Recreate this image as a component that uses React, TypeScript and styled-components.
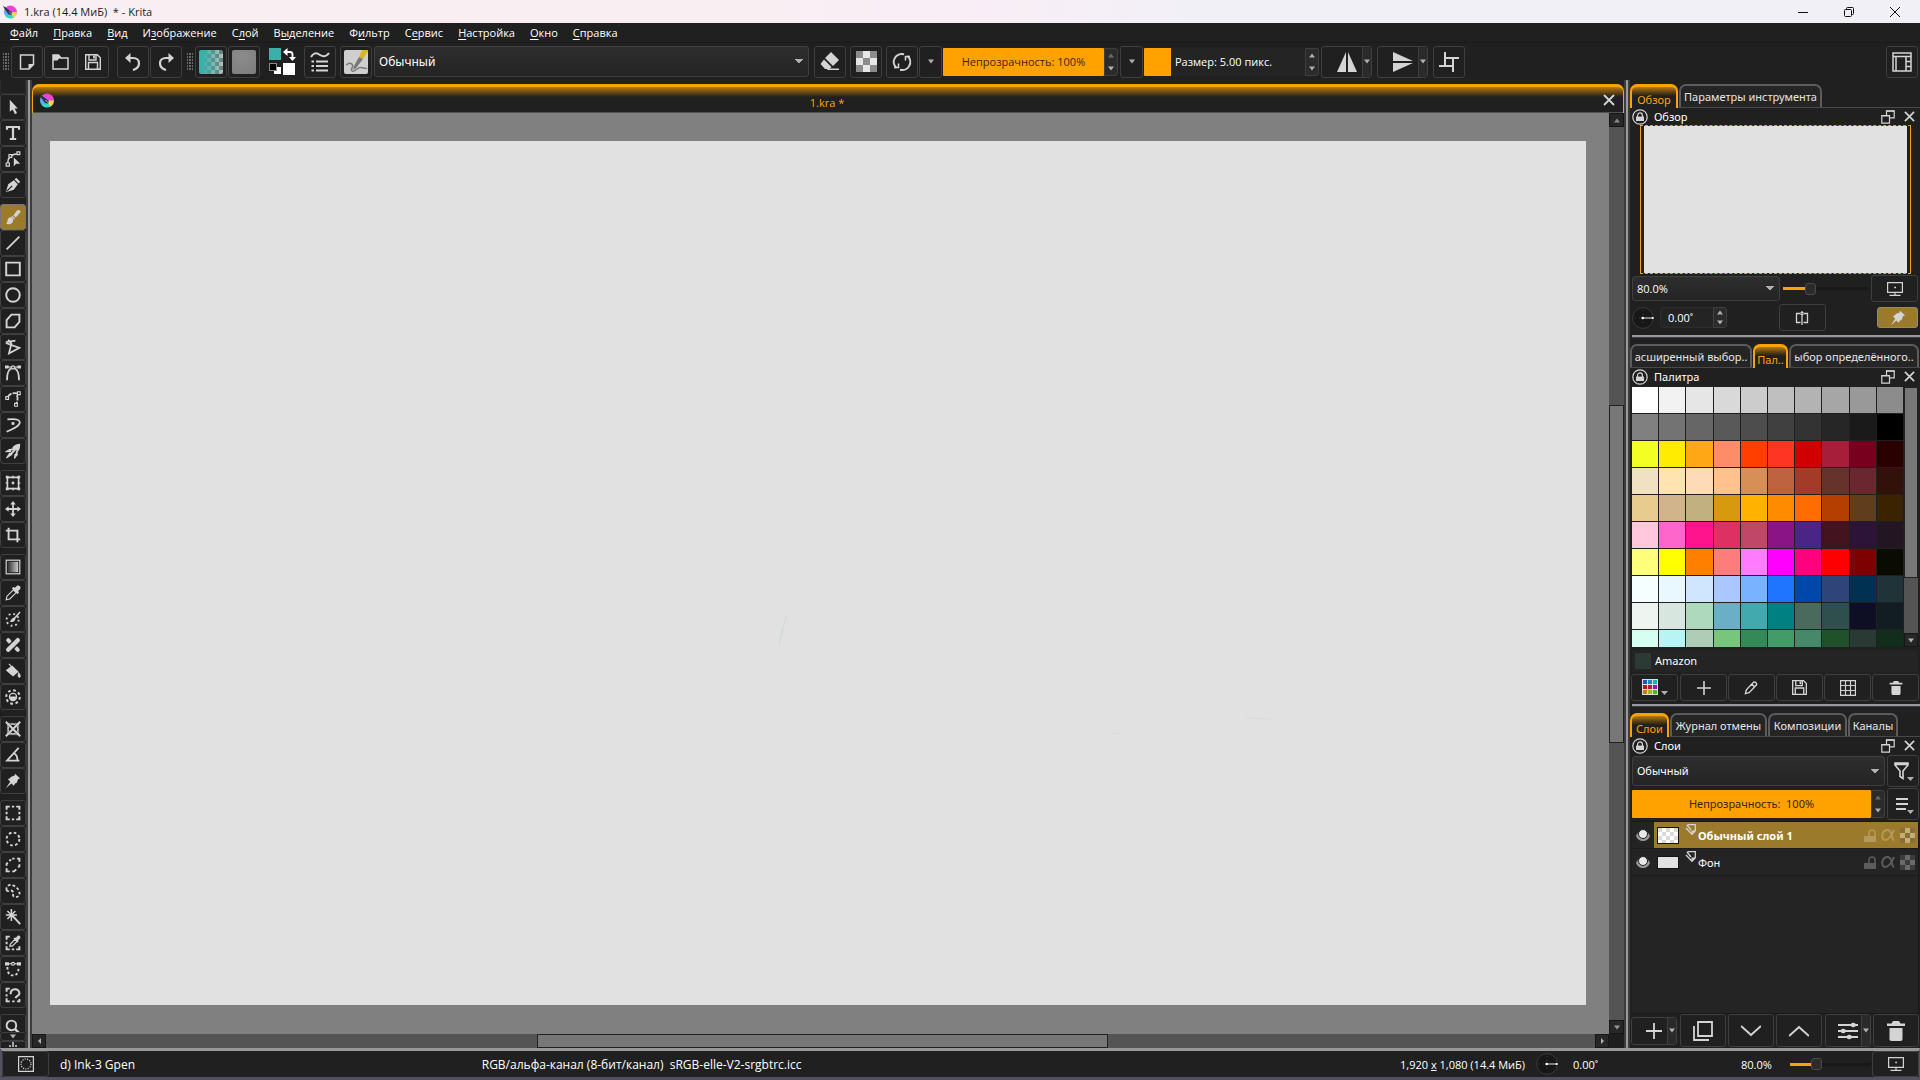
import React from 'react';
import styled, { createGlobalStyle, css } from 'styled-components';

const ORANGE = '#ffa200';
const BG = '#202020';
const EDGE = '#3f3f3f';
const ICON = '#d4d4d4';
const UI = "'Noto Sans', 'Open Sans', sans-serif";
const TIGHT = "'Open Sans', 'Noto Sans', sans-serif";

const Global = createGlobalStyle`
  *, *::before, *::after { box-sizing: border-box; }
  body { margin: 0; background: ${BG}; color: #fff; font: 11px/16px ${UI}; overflow: hidden; }
  button, select, input { font: inherit; color: inherit; margin: 0; padding: 0; }
  svg { display: block; flex: none; }
  h2 { margin: 0; font: inherit; }
`;

const Window = styled.div`
  height: 100vh;
  display: flex;
  flex-direction: column;
`;

/* ---------- window frame ---------- */
const TitleBar = styled.header`
  height: 23px;
  flex: none;
  display: flex;
  align-items: center;
  gap: 7px;
  padding-left: 3px;
  color: #1c1c1c;
  font-family: ${TIGHT};
  background: linear-gradient(90deg, #f9eff2 0%, #f9eff2 38%, #f9edf6 50%, #f2f0f7 62%, #f2f0f7 100%);
`;
const Caption = styled.span`
  flex: 1;
  white-space: pre;
`;
const WinButtons = styled.div`
  display: flex;
  padding-right: 2px;
`;
const WinButton = styled.button`
  width: 46px;
  height: 20px;
  display: flex;
  justify-content: center;
  align-items: center;
  border: 0;
  background: none;
`;
const MenuBar = styled.nav`
  height: 19px;
  flex: none;
  display: flex;
  align-items: center;
  gap: 1px;
  padding-left: 3px;
`;
const MenuItem = styled.button`
  border: 0;
  background: none;
  padding: 0 7px;
  font-family: ${TIGHT};
  height: 19px;
  u { text-underline-offset: 2px; }
`;

/* ---------- shared controls ---------- */
const Btn = styled.button<{ $w?: number; $h?: number; $gap?: number; $on?: boolean; $flat?: boolean }>`
  width: ${p => p.$w ?? 32}px;
  height: ${p => p.$h ?? 32}px;
  margin-left: ${p => p.$gap ?? 1}px;
  flex: none;
  display: flex;
  justify-content: center;
  align-items: center;
  border: 1px solid ${p => (p.$flat ? 'transparent' : p.$on ? '#8c8a86' : EDGE)};
  border-radius: 3px;
  background: ${p => (p.$on ? '#9b7a2b' : BG)};
`;
const SplitBtn = styled.div<{ $w: number; $h: number; $gap?: number }>`
  width: ${p => p.$w}px;
  height: ${p => p.$h}px;
  margin-left: ${p => p.$gap ?? 1}px;
  flex: none;
  display: flex;
  border: 1px solid ${EDGE};
  border-radius: 3px;
`;
const SplitMain = styled.button`
  flex: 1;
  display: flex;
  align-items: center;
  justify-content: center;
  padding-left: 9px;
  border: 0;
  background: none;
`;
const SplitArrow = styled.button`
  width: 9px;
  display: flex;
  align-items: center;
  justify-content: center;
  border: 0;
  border-left: 1px solid ${EDGE};
  background: #2a2a2a;
`;
const Select = styled.select<{ $w?: number; $h: number; $grow?: boolean; $gap?: number; $size?: number; $tight?: boolean }>`
  appearance: none;
  height: ${p => p.$h}px;
  ${p => (p.$grow ? css`flex: 1; min-width: 0;` : css`flex: 0 1 ${p.$w}px; min-width: 60px;`)}
  margin-left: ${p => p.$gap ?? 0}px;
  padding: 0 20px 0 4px;
  border: 1px solid ${EDGE};
  border-radius: 3px;
  outline: 0;
  font-size: ${p => p.$size ?? 11}px;
  font-family: ${p => (p.$tight ? TIGHT : UI)};
  background:
    linear-gradient(to bottom right, #b0b0b0 50%, transparent 51%) right 5px center / 4px 5px no-repeat,
    linear-gradient(to bottom left, #b0b0b0 50%, transparent 51%) right 9px center / 4px 5px no-repeat,
    linear-gradient(#2e2e2e, #242424);
`;
const BarBox = styled.div<{ $w?: number; $h: number; $gap?: number }>`
  height: ${p => p.$h}px;
  margin-left: ${p => p.$gap ?? 0}px;
  ${p => (p.$w ? css`width: ${p.$w}px; flex: none;` : css`flex: 1;`)}
  display: flex;
  background: #242424;
`;
const BarStack = styled.label`
  flex: 1;
  display: grid;
  align-items: center;
  > * { grid-area: 1 / 1; }
`;
const BarRange = styled.input<{ $fill: number }>`
  appearance: none;
  width: 100%;
  height: 100%;
  outline: 0;
  background: linear-gradient(90deg, ${ORANGE} ${p => p.$fill}%, #242424 ${p => p.$fill}%);
  border-radius: 1px;
  &::-webkit-slider-thumb { appearance: none; width: 1px; height: 1px; }
`;
const BarText = styled.span<{ $dark?: boolean; $tight?: boolean }>`
  pointer-events: none;
  white-space: pre;
  font-family: ${p => (p.$tight ? TIGHT : UI)};
  ${p => (p.$dark ? css`color: #3a2500; text-align: center;` : css`padding-left: 31px;`)}
`;
const Spin = styled.div`
  width: 14px;
  flex: none;
  display: flex;
  flex-direction: column;
  border: 1px solid ${EDGE};
  border-radius: 0 3px 3px 0;
  background: #2b2b2b;
`;
const SpinBtn = styled.button`
  flex: 1;
  min-height: 0;
  display: flex;
  align-items: center;
  justify-content: center;
  border: 0;
  background: none;
`;
const MiniRange = styled.input<{ $fill: number; $w?: number }>`
  appearance: none;
  ${p => (p.$w ? css`width: ${p.$w}px; flex: none;` : css`flex: 1;`)}
  min-width: 0;
  height: 14px;
  background: linear-gradient(90deg, ${ORANGE} ${p => p.$fill}%, #181818 ${p => p.$fill}%) center / 100% 3px no-repeat;
  &::-webkit-slider-thumb {
    appearance: none;
    width: 11px;
    height: 12px;
    border: 1px solid #4a4a4a;
    border-radius: 3px;
    background: #2b2b2b;
  }
`;
const Fill = styled.span`
  flex: 1;
`;

/* ---------- toolbar ---------- */
const Toolbar = styled.div`
  height: 38px;
  flex: none;
  display: flex;
  align-items: center;
  padding: 0 2px 0 3px;
  border-top: 1px solid #1a1a1a;
`;
const Handle = styled.span<{ $gap?: number }>`
  width: 6px;
  height: 18px;
  margin: 0 1px 0 ${p => p.$gap ?? 0}px;
  flex: none;
  background:
    linear-gradient(${BG}, ${BG}) 1px 0 / 1px 100% repeat-y,
    linear-gradient(${BG}, ${BG}) 4px 0 / 1px 100% repeat-y,
    repeating-linear-gradient(#6a6a6a 0 2px, ${BG} 2px 3px);
`;
const GradientTile = styled.span`
  width: 24px;
  height: 24px;
  border-radius: 2px;
  background:
    linear-gradient(90deg, #3bb0a8 15%, rgba(59, 176, 168, 0.1)),
    repeating-conic-gradient(#777 0 25%, #c0c0c0 0 50%) 0 0 / 8px 8px;
`;
const PatternTile = styled.span`
  width: 24px;
  height: 24px;
  border-radius: 2px;
  background: radial-gradient(circle at 40% 30%, #8c8c8c, #7c7c7c);
`;

/* ---------- middle ---------- */
const Middle = styled.main`
  flex: 1;
  min-height: 0;
  display: flex;
`;
const Toolbox = styled.aside`
  width: 26px;
  flex: none;
  display: flex;
  flex-direction: column;
  overflow: hidden;
`;
const ToolboxHead = styled.div`
  height: 14px;
  flex: none;
  border: 1px solid #2c2c2c;
  border-top: 0;
`;
const ToolScroll = styled.div`
  flex: 1;
  min-height: 0;
  overflow: hidden;
`;
const ToolGroup = styled.div`
  display: flex;
  flex-direction: column;
  margin-bottom: 6px;
`;
const ToolBtn = styled.button<{ $on?: boolean }>`
  height: 26px;
  flex: none;
  display: flex;
  align-items: center;
  justify-content: center;
  border: 1px solid ${p => (p.$on ? '#77757a' : EDGE)};
  border-radius: 3px;
  background: ${p => (p.$on ? '#9b7a2b' : BG)};
`;
const ToolMore = styled.button`
  height: 9px;
  flex: none;
  display: flex;
  align-items: center;
  justify-content: center;
  border: 1px solid ${EDGE};
  border-radius: 3px;
  background: ${BG};
`;
const ToolPeek = styled.div`
  height: 7px;
  flex: none;
  display: flex;
  justify-content: center;
  border: 1px solid ${EDGE};
  border-bottom: 0;
`;
const VSplit = styled.div`
  width: 6px;
  flex: none;
  background: linear-gradient(#9a9a9a, #9a9a9a) 2px 0 / 2px 100% no-repeat, #3c3c3c;
`;
const Doc = styled.section`
  flex: 1;
  min-width: 0;
  display: flex;
  flex-direction: column;
  padding-top: 4px;
`;
const DocTitle = styled.div`
  height: 29px;
  flex: none;
  display: grid;
  grid-template-columns: 26px 1fr 28px;
  align-items: center;
  border: 2px solid ${ORANGE};
  border-width: 3px 1px 0 1px;
  border-radius: 7px 7px 0 0;
  background: linear-gradient(#b87a10, #4f3a14 7px, ${BG} 10px);
  box-shadow: inset 0 -1px #505050;
`;
const DocName = styled.span`
  text-align: center;
  padding-top: 5px;
  color: ${ORANGE};
  font-family: ${TIGHT};
`;
const DocIcon = styled.span`
  display: flex;
  justify-content: center;
`;
const PlainBtn = styled.button<{ $gap?: number }>`
  display: flex;
  align-items: center;
  justify-content: center;
  margin-left: ${p => p.$gap ?? 0}px;
  border: 0;
  background: none;
`;
const DocBody = styled.div`
  flex: 1;
  min-height: 0;
  display: grid;
  grid-template: 1fr 14px / 1fr 15px;
`;
const Desk = styled.div`
  background: #808080;
  padding: 28px 23px 29px 18px;
  display: flex;
`;
const Paper = styled.div`
  flex: 1;
  background: #e1e1e1;
  display: flex;
`;
const ScrollV = styled.div`
  display: flex;
  flex-direction: column;
  background: #545454;
`;
const ScrollH = styled.div`
  display: flex;
  background: #545454;
`;
const ScrollArrow = styled.button`
  min-width: 14px;
  height: 14px;
  flex: none;
  display: flex;
  align-items: center;
  justify-content: center;
  border: 1px solid #161616;
  background: #272727;
`;
const Thumb = styled.div<{ $size: number }>`
  flex: ${p => p.$size};
  border: 1px solid #222;
  background: #777;
`;
const Track = styled.div<{ $size: number }>`
  flex: ${p => p.$size};
`;
const Corner = styled.div`
  background: #1e1e1e;
`;

/* ---------- dockers ---------- */
const Docks = styled.aside`
  width: 290px;
  flex: none;
  display: flex;
  flex-direction: column;
  padding: 4px 0 1px;
`;
const Dock = styled.section<{ $grow?: boolean }>`
  display: flex;
  flex-direction: column;
  ${p => p.$grow && css`flex: 1; min-height: 0;`}
`;
const HSplit = styled.div<{ $gap: number }>`
  height: 11px;
  margin-top: ${p => p.$gap}px;
  flex: none;
  background: linear-gradient(#9a9a9a, #9a9a9a) 2px 2px / 100% 2px no-repeat,
    linear-gradient(#3f3d4c, #3f3d4c) 2px 4px / 100% 1px no-repeat;
`;
const Tabs = styled.div`
  height: 24px;
  display: flex;
  gap: 1px;
  border-bottom: 1px solid #484848;
`;
const Tab = styled.button<{ $w: number; $on?: boolean }>`
  width: ${p => p.$w}px;
  height: ${p => (p.$on ? 24 : 23)}px;
  flex: none;
  display: flex;
  justify-content: center;
  overflow: hidden;
  white-space: nowrap;
  border: 2px solid #5c5c5c;
  border-bottom: 0;
  border-radius: 7px 7px 0 0;
  padding-top: 3px;
  color: #e6e6e6;
  background: #252525;
  ${p => p.$on && css`
    border: 2px solid ${ORANGE};
    border-bottom: 0;
    border-top-width: 3px;
    padding-top: 5px;
    color: ${ORANGE};
    background: linear-gradient(#b87a10, #4f3a14 6px, ${BG} 9px);
  `}
`;
const DockHead = styled.div`
  height: 17px;
  display: flex;
  align-items: center;
  padding: 0 5px 0 2px;
`;
const DockTitle = styled.h2`
  flex: 1;
  padding-left: 6px;
`;
const Row = styled.div<{ $top?: number; $pad?: number; $gap?: number }>`
  display: flex;
  align-items: center;
  margin-top: ${p => p.$top ?? 0}px;
  padding: 0 ${p => p.$pad ?? 2}px;
  gap: ${p => p.$gap ?? 0}px;
`;
const Overview = styled.div`
  height: 149px;
  margin: 0 9px 0 10px;
  border: 1px dashed ${ORANGE};
  border-left-style: solid;
  border-right-style: solid;
  padding: 0 3px;
  display: flex;
`;
const OverviewPaper = styled.div`
  flex: 1;
  background: #e1e1e1;
`;
const SpinBox = styled.div`
  width: 67px;
  height: 21px;
  margin-left: 6px;
  display: flex;
`;
const SpinInput = styled.input`
  flex: 1;
  min-width: 0;
  padding-left: 7px;
  border: 1px solid #2c2c2c;
  border-right: 0;
  border-radius: 3px 0 0 3px;
  background: #242424;
  font-family: ${TIGHT};
`;
const PaletteView = styled.div`
  height: 260px;
  display: flex;
  margin: 2px 2px 0 2px;
  overflow: hidden;
`;
const Swatches = styled.div`
  flex: 1;
  display: grid;
  grid-template-columns: repeat(10, 1fr);
  grid-auto-rows: 26px;
  gap: 1px;
  margin-right: 1px;
`;
const Swatch = styled.button<{ $c: string }>`
  border: 0;
  background: ${p => p.$c};
`;
const ColorName = styled.div`
  height: 22px;
  margin: 3px 2px 0;
  display: flex;
  align-items: center;
  gap: 4px;
  padding-left: 3px;
  background: #242424;
`;
const Chip = styled.span`
  width: 16px;
  height: 16px;
  background: #2a3b35;
`;
const LayerList = styled.div`
  flex: 1;
  min-height: 0;
  margin: 1px 1px 0 2px;
  border: 1px solid #191919;
  border-left-width: 0;
  background: #242424;
`;
const LayerRow = styled.div<{ $on?: boolean }>`
  height: 27px;
  display: flex;
  align-items: stretch;
  border-bottom: 1px solid #1a1a1a;
  font-weight: ${p => (p.$on ? 700 : 400)};
`;
const EyeCell = styled.button`
  width: 22px;
  flex: none;
  display: flex;
  align-items: center;
  justify-content: center;
  border: 0;
  background: none;
`;
const LayerMain = styled.div<{ $on?: boolean }>`
  flex: 1;
  display: flex;
  align-items: center;
  padding: 0 3px;
  background: ${p => (p.$on ? '#9b7a2b' : 'transparent')};
`;
const Thumbnail = styled.span<{ $checker?: boolean }>`
  width: 22px;
  height: ${p => (p.$checker ? 17 : 13)}px;
  border: 1px solid #141414;
  background: ${p => (p.$checker ? 'repeating-conic-gradient(#fff 0 25%, #dadada 0 50%) 0 0 / 8px 8px' : '#e1e1e1')};
`;
const LayerBadge = styled.span`
  align-self: flex-start;
  margin: 2px 2px 0 6px;
`;
const LayerName = styled.span`
  flex: 1;
  padding-top: 2px;
`;
const LayerFlags = styled.span<{ $on?: boolean }>`
  display: flex;
  align-items: center;
  gap: 5px;
  color: ${p => (p.$on ? '#b39a5c' : '#5c5c5c')};
`;

/* ---------- status bar ---------- */
const StatusBar = styled.footer`
  height: 32px;
  flex: none;
  display: flex;
  align-items: center;
  border-top: 3px solid #999;
  border-bottom: 3px solid #53505f;
  border-left: 2px solid #53505f;
  border-right: 1px solid #53505f;
  font-family: ${TIGHT};
`;
const StatusText = styled.span<{ $w: number; $gap?: number }>`
  width: ${p => p.$w}px;
  margin-left: ${p => p.$gap ?? 0}px;
  padding-top: 2px;
  white-space: pre;
`;
const BrushName = styled.span`
  width: 22%;
  margin-left: 11px;
  padding-top: 2px;
  font-size: 12px;
`;
const ProfileText = styled.span`
  flex: 1;
  padding-top: 2px;
  font-size: 12px;
  white-space: pre;
`;

/* ---------- icons ---------- */
const Svg = ({ s = 20, w, vb = '0 0 20 20', sw = 2, fill = 'none', children }: {
  s?: number; w?: number; vb?: string; sw?: number; fill?: string; children: React.ReactNode;
}) => (
  <svg width={w ?? s} height={s} viewBox={vb} fill={fill} stroke={fill === 'none' ? ICON : 'none'} strokeWidth={sw} aria-hidden="true">
    {children}
  </svg>
);
const Down = ({ c = '#b0b0b0' }: { c?: string }) => (
  <svg width="8" height="5" viewBox="0 0 8 5" aria-hidden="true"><path d="M1 0.500h6L4 4.500z" fill={c} /></svg>
);
const Up = ({ c = '#b0b0b0' }: { c?: string }) => (
  <svg width="8" height="5" viewBox="0 0 8 5" aria-hidden="true"><path d="M1 4.500h6L4 0.500z" fill={c} /></svg>
);
const Side = ({ flip }: { flip?: boolean }) => (
  <svg width="5" height="8" viewBox="0 0 5 8" aria-hidden="true"><path d={flip ? 'M1 1v6l3-3z' : 'M4 1v6L1 4z'} fill="#b0b0b0" /></svg>
);
const Cross = ({ s = 12 }: { s?: number }) => (
  <Svg s={s} vb="0 0 12 12" sw={1.8}><path d="M1 1l10 10M11 1L1 11" /></Svg>
);

const KritaLogo = ({ s = 14 }: { s?: number }) => (
  <svg width={s} height={s} viewBox="0 0 16 16" aria-hidden="true">
    <defs>
      <linearGradient id={`k${s}`} x1="0" y1="1" x2="1" y2="0">
        <stop offset="0" stopColor="#18e0f0" /><stop offset=".35" stopColor="#6f9cff" /><stop offset=".6" stopColor="#e83cf0" /><stop offset="1" stopColor="#ff4fa0" />
      </linearGradient>
    </defs>
    <circle cx="8.500" cy="8" r="7.400" fill={`url(#k${s})`} />
    <path d="M9.500 8h6.400a7.400 7.400 0 0 1-5.500 7c-1.500-2-1.500-5-.9-7z" fill="#f6d84a" />
    <path d="M3 12.500c2 3 6 3.500 9 2l-2-4z" fill="#27e0c0" />
    <path d="M0 1c3 1 6 4 8.500 6 2 1 3 3 1 4s-4-1-5-3C3.500 6 1 4 0 1z" fill="#33303f" />
    <path d="M7 7.500c1 2 2 2 3.500 2.500" stroke="#b8bccc" strokeWidth="1" fill="none" />
  </svg>
);

const Checker = ({ s = 18, a = '#e6e6e6', b = '#8c8c8c' }: { s?: number; a?: string; b?: string }) => (
  <svg width={s} height={s} viewBox="0 0 3 3" preserveAspectRatio="none" shapeRendering="crispEdges" aria-hidden="true">
    <rect width="3" height="3" fill={b} /><path d="M1 0h1v1h1v1h-1v1h-1v-1h-1v-1h1z" fill={a} /><rect x="1" y="1" width="1" height="1" fill={b} />
  </svg>
);

const PinPath = <path d="M12.500 1l6.500 6-2.500.5-2 5-2 .5-1.500 3-3-3L1 19l5.500-8-3-3.500 3-1 .5-1.500 5-2z" fill={ICON} stroke="none" />;

const tools: Record<string, React.ReactNode> = {
  'Выбор фигур': <path d="M6 1v15l3.500-3 3 6 2.500-1.500-3-5.500h4z" fill={ICON} stroke="none" />,
  'Текст': <path d="M2.500 6V2.500h15V6M10 3v14M6 17.500h8" strokeWidth="2.800" />,
  'Правка фигур': <><path d="M3.500 15C3.500 8 7 4.500 15 3.500" /><path d="M1.500 15h4v4h-4zM5 4.500h3.500v3.500H5zM15 1h3.500v3.500H15z" strokeWidth="1.500" fill={BG} /><path d="M11 8v11l3-3h5z" fill={ICON} stroke="none" /></>,
  'Каллиграфия': <><path d="M1 19l3-10 7-5 5 5-5 7z" fill={ICON} stroke="none" /><path d="M12 3l2-2 5 5-2 2z" fill={ICON} stroke="none" /><path d="M2 18l7-7" stroke={BG} strokeWidth="1.500" /></>,
  'Кисть': <><path d="M10.500 8l4.500-6c2-2 5.500 0 4 2.500L13.500 10.500z" fill={ICON} stroke="none" /><path d="M8.500 9l3.500 3.500" stroke={ICON} strokeWidth="1.500" /><path d="M1 18.500c3-1 1-6 4.500-8 4-1 6 3 4 6-2 3-5.500 3-8.500 2z" fill={ICON} stroke="none" /></>,
  'Линия': <path d="M2 18L18 2" strokeWidth="2.200" />,
  'Прямоугольник': <path d="M1.500 2h17v16h-17z" strokeWidth="2.400" />,
  'Эллипс': <circle cx="10" cy="10" r="8.500" strokeWidth="2.400" />,
  'Многоугольник': <path d="M8 2h10v9l-6 7H2V9z" strokeWidth="2.400" />,
  'Ломаная': <path d="M1 4l12-2M1 5l17 6-13 7L8 6 4 1" strokeWidth="2.200" />,
  'Кривая Безье': <><path d="M2.500 19C2.500 8 6 4 10 4s7.500 4 7.500 15" strokeWidth="2.200" /><path d="M2 2.500h16" strokeWidth="1.500" /><path d="M0 2.500h4.500M15.500 2.500H20" strokeWidth="4" /><circle cx="10" cy="3" r="1.800" strokeWidth="1.500" fill={BG} /></>,
  'Произвольный контур': <><path d="M3 8c3-5 7-6 12-5M15 5c1 3 1 7-1 11" strokeWidth="2.200" strokeDasharray="7 1.500" /><path d="M1 7h3.500v3.500H1zM15.500 1H19v3.500h-3.500zM12 15.500h3.500V19H12z" fill={BG} strokeWidth="1.400" /></>,
  'Динамическая кисть': <><path d="M3 3c9-1 15-.5 15.500 3.500C18.500 11 12 14 2 18.500" strokeWidth="2.200" /><circle cx="10" cy="8" r="1" fill={ICON} /></>,
  'Мультикисть': <><path d="M19 1c0 5-1 8-3 10l-2-2-3-2-2-1c2-3 6-5 10-5z" fill={ICON} stroke="none" /><path d="M12 7L6 9M13 8l-6 6M15 10l-1 6" strokeWidth="2.400" /><path d="M1 11l5-3 1 2.500zM2 18.500l4-6 2.500 2zM12 19l.500-5h3z" fill={ICON} strokeWidth="1.400" strokeLinejoin="round" /></>,
  'Преобразование': <><path d="M3 3h14v14H3z" /><path d="M1 1h3.500v3.500H1zM15.500 1H19v3.500h-3.500zM1 15.500h3.500V19H1zM15.500 15.500H19V19h-3.500zM9 1h2v3H9zM9 16h2v3H9zM1 9h3v2H1zM16 9h3v2h-3z" fill={ICON} stroke="none" /><circle cx="10" cy="10" r=".8" fill={ICON} /></>,
  'Перемещение': <><path d="M10 3v14M3 10h14" strokeWidth="2.200" /><path d="M10 0l3.500 4.500h-7zM10 20l3.500-4.500h-7zM0 10l4.500-3.500v7zM20 10l-4.500-3.500v7z" fill={ICON} stroke="none" /></>,
  'Кадрирование': <path d="M4.500 1v14.500H19M1 4.500h14.500V19" strokeWidth="2.400" />,
  'Градиент': <><defs><linearGradient id="tg"><stop offset="0" stopColor="#333" /><stop offset="1" stopColor="#ccc" /></linearGradient></defs><rect x="3.500" y="3.500" width="13" height="13" fill="url(#tg)" stroke="none" /><rect x="1.500" y="1.500" width="17" height="17" strokeWidth="1.500" /></>,
  'Пипетка': <><path d="M1.500 18.500l1-4.500 8-8 3.500 3.500-8 8z" strokeWidth="1.500" /><path d="M8.500 4l2-1.500 2 1 2.500-2.500c2.500-1.500 5.500 1 4 4L16.500 7.500l1 2-2 2z" fill={ICON} stroke="none" /></>,
  'Раскраска': <><path d="M6 13c2-1 2-4.500 5.500-5L18 .5 19.500 2 13 9.500c0 3.500-4 5.500-7 3.500z" fill={ICON} stroke="none" /><circle cx="9.500" cy="11" r="7.500" strokeDasharray="2.200 3.690" strokeWidth="2.400" /></>,
  'Умная заплатка': <><path d="M4 16L16 4" strokeWidth="5.500" strokeLinecap="round" /><path d="M4 4l2 2M14 14l2 2" strokeWidth="5" strokeLinecap="round" /><path d="M2.500 12l9-9M8.500 17l9-9" stroke={BG} strokeWidth="1.300" /></>,
  'Заливка': <><path d="M1 9l8-6 8 8-7 6z" fill={ICON} stroke="none" /><path d="M5 1l6 7" strokeWidth="1.500" /><path d="M17 12c2 2 3 6 1 6s-2-3-1-6z" fill={ICON} strokeWidth="1" /></>,
  'Замкнутая заливка': <><circle cx="10" cy="10" r="8.500" strokeDasharray="3.340 3.340" strokeWidth="2.500" /><circle cx="10" cy="10" r="4.500" strokeWidth="1.500" /><path d="M5.500 9.500h9c0 6.500-9 6.500-9 0z" fill={ICON} stroke="none" /></>,
  'Помощники': <><path d="M1 1l18 18M19 1L1 19" strokeWidth="2.400" /><circle cx="10" cy="10" r="6" strokeWidth="1.300" /><path d="M3 3h14v14H3z" strokeWidth=".8" /></>,
  'Измерение': <path d="M17 1L2.500 17H18M11 8c3 1 4.500 4 4.500 9" strokeWidth="2.200" />,
  'Образцы': PinPath,
  'Прямоугольное выделение': <path d="M2 6V2h4M14 2h4v4M18 14v4h-4M6 18H2v-4M8.500 2h3M8.500 18h3M2 8.500v3M18 8.500v3" strokeWidth="2.400" />,
  'Эллиптическое выделение': <circle cx="10" cy="10" r="8" strokeWidth="2.400" strokeDasharray="3.300 2.980" />,
  'Многоугольное выделение': <path d="M9 2h3M15 2h3v4M18 9v2.500l-1.500 1.500M14 15.500L11.500 18H9M6 18H2v-4M2 11V8.500L3.500 7M5.500 5l2-2" strokeWidth="2.400" />,
  'Произвольное выделение': <path d="M2 9c-1-5 3-8 8-6 6 2 9 8 8 12-2 4-8 3-8 0s1-3-1-5-5 2-7-1z" strokeDasharray="3.500 2.500" strokeWidth="2.300" />,
  'Выделение подобных': <><path d="M9 8l10 11" strokeWidth="2.400" /><path d="M8 0v15M1 7.500h14M3 2.500l10 10M13 2.500l-10 10" strokeWidth="1.900" /></>,
  'Выделение по цвету': <><path d="M2 6V2h4M18 14v4h-4M6 18H2v-4M8.500 18h3M2 8.500v3" strokeWidth="2.400" /><path d="M6 14l1-3 5.500-5.500 2.500 2.500-6 6z" strokeWidth="1.500" /><path d="M10.500 4l2-1 1 .5 2.500-2.500c2-1 4 1 3 3l-2.500 2.500.5 1.500-1.500 1.500z" fill={ICON} stroke="none" /></>,
  'Выделение Безье': <><path d="M0 3.500h5M15 3.500h5" strokeWidth="4" /><path d="M4 3.500h12" strokeWidth="1.500" /><circle cx="10" cy="3.500" r="1.800" strokeWidth="1.500" fill={BG} /><path d="M3 7.500c0 8 3 10.500 7 10.500s7-2.500 7-10.500" strokeDasharray="3.200 2.600" strokeWidth="2.400" /></>,
  'Магнитное выделение': <><path d="M2 6V2h4M2 9v3M2 14v4h4M9 18h3M15 18h3v-3" strokeWidth="2.400" /><path d="M7 9c0-8 11-8 11-1 0 3-4 3-5 6" strokeWidth="2.600" /></>,
  'Масштаб': <><circle cx="8" cy="8" r="6" strokeWidth="2.400" /><path d="M12 12l6.500 6.500" strokeWidth="3" /></>,
};
const toolNames = Object.keys(tools);
const groups = [4, 10, 3, 6, 3, 8, 1].map((count, i, all) => {
  const start = all.slice(0, i).reduce((a, b) => a + b, 0);
  return toolNames.slice(start, start + count);
});

const NewIcon = <Svg s={16} sw={1.500} vb="0 0 16 16"><path d="M1.500 1h13v9.500L10 15H1.500z" /><path d="M9.500 10h5.500l-5.500 5.500z" fill={ICON} stroke="none" /></Svg>;
const OpenIcon = <Svg s={16} w={17} sw={1.500} vb="0 0 17 16"><path d="M1 15V1h5.500L9 4h7v11z" /><path d="M1 1h5.500L10 4.500H7L5.500 6.500H1z" fill={ICON} stroke="none" /></Svg>;
const DiskPath = <><path d="M.7.700h11.600l3 3v11.600H.7zM4 1v5h7V1M3.500 15V8.500h9V15" /><path d="M9 1.500v3" strokeWidth="1.800" /></>;
const PlusIcon = ({ s = 16 }: { s?: number }) => <Svg s={s} vb="0 0 16 16" sw={1.800}><path d="M8 0v16M0 8h16" /></Svg>;
const TrashIcon = ({ s = 18 }: { s?: number }) => <Svg s={s} vb="0 0 18 20" fill={ICON}><path d="M0 2.500h4.500L6 0h6l1.500 2.500H18V5H0zM2.500 7h13v11c0 1-.5 2-2 2h-9c-1.500 0-2-1-2-2z" /></Svg>;
const MonitorIcon = <Svg s={14} w={16} vb="0 0 16 14" sw={1.200}><path d="M.6.6h14.800v9.800H.6zM8 10v3M2.500 13.400h11" /><path d="M7.200 5.500h1.800" strokeWidth="1.600" /></Svg>;
const Dial = () => (
  <svg width="22" height="22" viewBox="0 0 22 22" aria-hidden="true">
    <circle cx="11" cy="11" r="10.400" fill="#171717" stroke="#3a3a3a" />
    <path d="M11 3v16M3 11h8" stroke="#444" strokeDasharray="1 3" />
    <path d="M10 11h11" stroke="#fff" strokeWidth=".9" /><circle cx="10.700" cy="11" r="1.300" fill="#fff" /><circle cx="20.700" cy="11" r="1.100" fill="#fff" />
  </svg>
);

const palette = `ffffff f2f2f2 e6e6e6 d9d9d9 cccccc bfbfbf b3b3b3 a6a6a6 999999 8c8c8c
808080 737373 666666 595959 4d4d4d 404040 333333 262626 1a1a1a 000000
f3ff24 ffec00 ffa714 ff8c69 ff3e00 ff3523 d10000 a71e3a 78001e 2a0000
f0e1c4 ffe3b0 ffdab9 ffc28e d78f58 be6340 a23c29 65332c 6b2730 32110a
e7cb8f d2b48c c1b180 d7990d ffb200 ff8c00 ff6c00 b53f00 603d1d 3b2300
ffc8dc ff66cb ff148e dd3063 c04768 8a1485 4b2585 431420 2c1338 241523
ffff7c ffff00 ff8000 ff7c7c ff7cff ff00ff ff007f ff0000 7e0000 0a0b02
f6ffff e9f8ff d0e6ff aac8ff 79b2ff 1f75ff 0047ab 2f4579 003153 1f3339
eef4f0 d7e6df aed9bc 6daec7 42a9ae 008080 4b6a5e 2f4f4f 0e0e24 111d22
d6fff2 b8f4f4 afccb6 78c67c 358857 429b69 468869 1f522a 293a35 122d1b`.split(/\s+/);

const layers = [
  { name: 'Обычный слой 1', on: true, checker: true },
  { name: 'Фон', on: false, checker: false },
];

const menus: [string, string, string][] = [
  ['', 'Ф', 'айл'], ['', 'П', 'равка'], ['', 'В', 'ид'], ['И', 'з', 'ображение'], ['С', 'л', 'ой'],
  ['В', 'ы', 'деление'], ['Ф', 'и', 'льтр'], ['С', 'е', 'рвис'], ['', 'Н', 'астройка'], ['', 'О', 'кно'], ['', 'С', 'правка'],
];

const Spinner = ({ max }: { max?: boolean }) => (
  <Spin>
    <SpinBtn aria-label="Больше"><Up c={max ? '#6a6a6a' : undefined} /></SpinBtn>
    <SpinBtn aria-label="Меньше"><Down /></SpinBtn>
  </Spin>
);

const DockHeader = ({ title }: { title: string }) => (
  <DockHead>
    <PlainBtn aria-label="Заблокировать">
      <Svg s={16} sw={1.500}><circle cx="10" cy="10" r="9" /><path d="M7 10V7.500C7.500 4 13 4 13 8v2" strokeWidth="1.500" /><path d="M5 9.500h10v5.500H5z" fill={ICON} stroke="none" /></Svg>
    </PlainBtn>
    <DockTitle>{title}</DockTitle>
    <PlainBtn aria-label="Открепить">
      <Svg s={14} vb="0 0 14 14" sw={1.200}><path d="M5.500 5V.8h7.700v7H9M.8 5.500h7.700v7.700H.8z" /><path d="M5 1.200h8.500M.5 6h8.500" /></Svg>
    </PlainBtn>
    <PlainBtn $gap={9} aria-label="Закрыть"><Cross s={11} /></PlainBtn>
  </DockHead>
);

export default function App() {
  return (
    <Window>
      <Global />
      <TitleBar>
        <KritaLogo />
        <Caption>1.kra (14.4 МиБ)  * - Krita</Caption>
        <WinButtons>
          <WinButton aria-label="Свернуть"><svg width="10" height="10"><path d="M0 5.500h10" stroke="#111" /></svg></WinButton>
          <WinButton aria-label="Восстановить"><svg width="10" height="10" fill="none" stroke="#111"><rect x=".5" y="2.500" width="7" height="7" rx="1" /><path d="M2.500 2V1.500q0-1 1-1h5q1 0 1 1v5q0 1-1 1H8" /></svg></WinButton>
          <WinButton aria-label="Закрыть"><svg width="10" height="10"><path d="M0 0l10 10M10 0L0 10" stroke="#111" /></svg></WinButton>
        </WinButtons>
      </TitleBar>
      <MenuBar>
        {menus.map(([a, b, c]) => <MenuItem key={a + b + c}>{a}<u>{b}</u>{c}</MenuItem>)}
      </MenuBar>

      <Toolbar>
        <Handle />
        <Btn aria-label="Создать">{NewIcon}</Btn>
        <Btn aria-label="Открыть">{OpenIcon}</Btn>
        <Btn aria-label="Сохранить"><Svg s={16} vb="0 0 16 16" sw={1.400}>{DiskPath}</Svg></Btn>
        <Btn $gap={8} aria-label="Отменить"><Svg s={18} w={16} vb="0 0 16 18" sw={2.200}><path d="M3 5h5c8 0 8 10 0 12" /><path d="M5.500 0v10L0 5z" fill={ICON} stroke="none" /></Svg></Btn>
        <Btn aria-label="Повторить"><Svg s={18} w={16} vb="0 0 16 18" sw={2.200}><path d="M13 5H8C0 5 0 15 8 17" /><path d="M10.500 0v10L16 5z" fill={ICON} stroke="none" /></Svg></Btn>
        <Handle $gap={5} />
        <Btn aria-label="Градиенты"><GradientTile /></Btn>
        <Btn aria-label="Текстуры"><PatternTile /></Btn>
        <Btn $gap={5} $w={34} $flat aria-label="Цвета">
          <svg width="28" height="28" viewBox="0 0 28 28">
            <rect x="1" width="12" height="12" fill="#3bb0a8" /><rect x="15" y="15" width="12" height="12" fill="#fff" />
            <rect x="6" y="19" width="7" height="7" fill="#fff" /><rect x="1.500" y="15.500" width="7" height="7" fill="#000" stroke="#888" />
            <path d="M18 4h4q2.500 0 2.500 2.500V9" stroke="#fff" strokeWidth="1.800" fill="none" /><path d="M15 4l4.500-4v8zM24.500 13l-3.500-4h7z" fill="#fff" />
          </svg>
        </Btn>
        <Btn $gap={5} aria-label="Параметры кисти">
          <Svg s={20} sw={2}><path d="M1 5c3-5 6-4 9-2s6 2 9-2" /><path d="M6 9.500h12M6 14h12M6 18.500h12M1.500 9.500h2.500M1.500 14h2.500M1.500 18.500h2.500" /></Svg>
        </Btn>
        <Btn $gap={4} aria-label="Набор кистей">
          <svg width="24" height="24" viewBox="0 0 24 24">
            <rect width="24" height="24" rx="2" fill="#cfcfcf" /><path d="M18 0h6v1l-5 8-4-2z" fill="#d8b428" /><path d="M15 7l4 2-7 9-3 2 1-4z" fill="#777" />
            <path d="M2 15c5-4 8 0 6 3s1 5 5 1 8 1 10-1" fill="none" stroke="#7c7c7c" strokeWidth="1.500" />
          </svg>
        </Btn>
        <Select $w={435} $h={31} $gap={2} $size={12} aria-label="Режим смешивания"><option>Обычный</option></Select>
        <Btn $gap={5} aria-label="Ластик">
          <Svg s={20} fill={ICON}><path d="M11 0l8 8-6 6-8-8zM4 7.500l7.500 7.500-2 2H5L.5 12z" /><path d="M8 16.500h11V18H7z" /></Svg>
        </Btn>
        <Btn $gap={4} aria-label="Сохранять альфа-канал"><Checker s={21} /></Btn>
        <Btn $gap={4} aria-label="Перезагрузить">
          <Svg s={20}><path d="M12 2.300A8 8 0 0 0 4.500 16M8 17.700A8 8 0 0 0 15.500 4" /><path d="M2 15.500h4.500v-4M18 4.500h-4.500v4" strokeWidth="1.600" /></Svg>
        </Btn>
        <Btn $w={23} aria-label="Ещё"><Down /></Btn>
        <BarBox $w={175} $h={28} $gap={1}>
          <BarStack><BarRange type="range" defaultValue={100} $fill={100} /><BarText $dark $tight>Непрозрачность: 100%</BarText></BarStack>
          <Spinner max />
        </BarBox>
        <Btn $w={23} $gap={2} aria-label="Ещё"><Down /></Btn>
        <BarBox $w={175} $h={28} $gap={1}>
          <BarStack><BarRange type="range" defaultValue={17} $fill={17} /><BarText $tight>Размер: 5.00 пикс.</BarText></BarStack>
          <Spinner />
        </BarBox>
        <SplitBtn $w={51} $h={32} $gap={2}>
          <SplitMain aria-label="Отразить по горизонтали"><Svg s={20} fill={ICON}><path d="M9 0v20H0zM11 0v20h9z" /></Svg></SplitMain>
          <SplitArrow aria-label="Параметры"><Down /></SplitArrow>
        </SplitBtn>
        <SplitBtn $w={51} $h={32} $gap={5}>
          <SplitMain aria-label="Отразить по вертикали"><Svg s={20} fill={ICON}><path d="M0 0v9h20zM0 11v9l20-9z" /></Svg></SplitMain>
          <SplitArrow aria-label="Параметры"><Down /></SplitArrow>
        </SplitBtn>
        <Btn $gap={5} aria-label="Режим переноса"><Svg s={20}><path d="M6 0v14M0 14h14v6M14 20V6M6 6h14" /></Svg></Btn>
        <Fill />
        <Btn aria-label="Рабочие пространства">
          <Svg s={20} sw={1.500}><path d="M1 1h18v18H1zM1 4.500h18M4 4.500V19M14 4.500V19M14 9.500h5M14 14.500h5" /></Svg>
        </Btn>
      </Toolbar>

      <Middle>
        <Toolbox>
          <ToolboxHead />
          <ToolScroll>
            {groups.map(names => (
              <ToolGroup key={names[0]}>
                {names.map(name => (
                  <ToolBtn key={name} $on={name === 'Кисть'} aria-label={name}><Svg s={16}>{tools[name]}</Svg></ToolBtn>
                ))}
              </ToolGroup>
            ))}
          </ToolScroll>
          <ToolMore aria-label="Прокрутить"><Down /></ToolMore>
          <ToolPeek><svg width="8" height="5"><path d="M1 3v2M4 0v5M7 3v2" stroke={ICON} strokeWidth="1.500" /></svg></ToolPeek>
        </Toolbox>
        <VSplit />

        <Doc>
          <DocTitle>
            <DocIcon><KritaLogo s={15} /></DocIcon>
            <DocName>1.kra *</DocName>
            <PlainBtn aria-label="Закрыть документ"><Cross /></PlainBtn>
          </DocTitle>
          <DocBody>
            <Desk>
              <Paper>
                <svg width="100%" height="100%" viewBox="0 0 1536 864" fill="none" stroke="#cfd9d8" aria-hidden="true">
                  <path d="M737 474l-6 18M733 488l-4 16" /><path d="M1195 577l26 1M1060 593l10-1" stroke="#dadcdc" />
                </svg>
              </Paper>
            </Desk>
            <ScrollV>
              <ScrollArrow aria-label="Вверх"><Up c="#888" /></ScrollArrow>
              <Track $size={279} /><Thumb $size={336} /><Track $size={278} />
              <ScrollArrow aria-label="Вниз"><Down c="#999" /></ScrollArrow>
            </ScrollV>
            <ScrollH>
              <ScrollArrow aria-label="Влево"><Side /></ScrollArrow>
              <Track $size={492} /><Thumb $size={569} /><Track $size={488} />
              <ScrollArrow aria-label="Вправо"><Side flip /></ScrollArrow>
            </ScrollH>
            <Corner />
          </DocBody>
        </Doc>
        <VSplit />

        <Docks>
          <Dock>
            <Tabs role="tablist">
              <Tab role="tab" $w={48} $on>Обзор</Tab>
              <Tab role="tab" $w={143}>Параметры инструмента</Tab>
            </Tabs>
            <DockHeader title="Обзор" />
            <Overview><OverviewPaper /></Overview>
            <Row $top={1} $gap={3}>
              <Select $w={148} $h={25} $tight aria-label="Масштаб"><option>80.0%</option></Select>
              <MiniRange type="range" defaultValue={30} $fill={30} aria-label="Масштаб" />
              <Btn $w={47} $h={27} $gap={0} aria-label="На весь экран">{MonitorIcon}</Btn>
            </Row>
            <Row $top={2}>
              <Dial />
              <SpinBox><SpinInput defaultValue="0.00˚" aria-label="Угол" /><Spinner /></SpinBox>
              <Fill />
              <Btn $w={47} $h={27} aria-label="Отразить"><Svg s={14} vb="0 0 14 14" sw={1.300}><path d="M5.500 2.500H1.500v9h4M8.500 2.500h4v9h-4M7 0v14" /><path d="M5.500 3.500h3M5.500 1.500h3" strokeWidth="1" /></Svg></Btn>
              <Fill />
              <Btn $w={41} $h={21} $on aria-label="Закрепить"><Svg s={16}>{PinPath}</Svg></Btn>
            </Row>
          </Dock>
          <HSplit $gap={2} />
          <Dock>
            <Tabs role="tablist">
              <Tab role="tab" $w={122}>асширенный выбор..</Tab>
              <Tab role="tab" $w={35} $on>Пал..</Tab>
              <Tab role="tab" $w={130}>ыбор определённого..</Tab>
            </Tabs>
            <DockHeader title="Палитра" />
            <PaletteView>
              <Swatches>{palette.map((c, i) => <Swatch key={i} $c={`#${c}`} aria-label={`#${c}`} />)}</Swatches>
              <ScrollV>
                <Thumb $size={191} /><Track $size={56} />
                <ScrollArrow aria-label="Вниз"><Down /></ScrollArrow>
              </ScrollV>
            </PaletteView>
            <ColorName><Chip />Amazon</ColorName>
            <Row $top={2} $pad={1} $gap={1}>
              <Btn $w={47} $h={27} $gap={0} aria-label="Палитры">
                <svg width="27" height="17" viewBox="-1 0 27 17"><rect width="16" height="16" fill="#ddd" />
                  {['#0a5fc0', '#0a90c0', '#0ab8b0', '#c01010', '#c01050', '#9a10c0', '#c08010', '#a0c010', '#40c010'].map((c, i) => (
                    <rect key={c} x={1 + (i % 3) * 5} y={1 + Math.floor(i / 3) * 5} width="4" height="4" fill={c} />
                  ))}
                  <path d="M19 12h7l-3.500 4z" fill="#b0b0b0" /></svg>
              </Btn>
              <Btn $w={47} $h={27} aria-label="Добавить"><PlusIcon s={14} /></Btn>
              <Btn $w={47} $h={27} $gap={0} aria-label="Изменить"><Svg s={15} vb="0 0 16 16" sw={1.500}><path d="M1.500 14.500l1-4 8-8.500q3 0 3 3l-8 8.500zM8.500 4.500l3 3" /></Svg></Btn>
              <Btn $w={47} $h={27} $gap={0} aria-label="Сохранить"><Svg s={15} vb="0 0 16 16" sw={1.400}>{DiskPath}</Svg></Btn>
              <Btn $w={47} $h={27} $gap={0} aria-label="Сетка"><Svg s={16} vb="0 0 16 16" sw={1.200}><path d="M.6.6h14.800v14.800H.6zM5.500 0v16M10.500 0v16M0 5.500h16M0 10.500h16" /></Svg></Btn>
              <Btn $w={47} $h={27} $gap={0} aria-label="Удалить"><TrashIcon s={14} /></Btn>
            </Row>
          </Dock>
          <HSplit $gap={1} />
          <Dock $grow>
            <Tabs role="tablist">
              <Tab role="tab" $w={39} $on>Слои</Tab>
              <Tab role="tab" $w={97}>Журнал отмены</Tab>
              <Tab role="tab" $w={79}>Композиции</Tab>
              <Tab role="tab" $w={50}>Каналы</Tab>
            </Tabs>
            <DockHeader title="Слои" />
            <Row $top={1} $pad={1} $gap={2}>
              <Select $grow $h={30} $gap={1} aria-label="Режим слоя"><option>Обычный</option></Select>
              <Btn $gap={0} aria-label="Фильтр слоёв"><Svg s={20} w={22} vb="0 0 22 20" sw={1.600}><path d="M3 2h13v2l-5 6v7.500l-3-2V10L3 4zM3 3.500h13" /><path d="M15 16h7l-3.500 4z" fill="#b0b0b0" stroke="none" /></Svg></Btn>
            </Row>
            <Row $top={1} $pad={1} $gap={2}>
              <BarBox $h={28} $gap={1}>
                <BarStack><BarRange type="range" defaultValue={100} $fill={100} /><BarText $dark>Непрозрачность:  100%</BarText></BarStack>
                <Spinner max />
              </BarBox>
              <Btn $gap={0} aria-label="Свойства"><Svg s={20} w={22} vb="0 0 22 20" sw={2}><path d="M4 5h12M4 10h12M4 15h10" /><path d="M15 16h7l-3.500 4z" fill="#b0b0b0" stroke="none" /></Svg></Btn>
            </Row>
            <LayerList>
              {layers.map(l => (
                <LayerRow key={l.name} $on={l.on}>
                  <EyeCell aria-label="Видимость">
                    <Svg s={14} vb="0 0 14 14"><path d="M0 8q2-5 7-5t7 5q-2 5-7 5T0 8z" fill="#999" stroke="none" /><circle cx="7" cy="6" r="4.500" fill="#e8e8e8" stroke="#222" strokeWidth="1" /></Svg>
                  </EyeCell>
                  <LayerMain $on={l.on}>
                    <Thumbnail $checker={l.checker} />
                    <LayerBadge><Svg s={11} vb="0 0 11 11" sw={1.300}><path d="M2.500.7h7.800v6L7 10.300 1 4" /><path d="M2 1l4 5" /><path d="M6.500 10.500v-4h4z" fill={ICON} stroke="none" /></Svg></LayerBadge>
                    <LayerName>{l.name}</LayerName>
                    <LayerFlags $on={l.on}>
                      <svg width="12" height="13" viewBox="0 0 12 13"><path d="M0 7h12v6H0z" fill="currentColor" /><path d="M5 7V4q0-3 3-3t3 3v3" fill="none" stroke="currentColor" strokeWidth="1.500" /></svg>
                      <svg width="14" height="12" viewBox="0 0 14 12" fill="none" stroke="currentColor" strokeWidth="2"><path d="M13 1C11 6 8 11 4 11S0 2 6 1s4 10 7 10" /></svg>
                      <Checker s={15} a={l.on ? '#c5ae70' : '#6a6a6a'} b={l.on ? '#857039' : '#3c3c3c'} />
                    </LayerFlags>
                  </LayerMain>
                </LayerRow>
              ))}
            </LayerList>
            <Row $pad={1} $gap={2}>
              <SplitBtn $w={46} $h={28} $gap={0}>
                <SplitMain aria-label="Добавить слой"><PlusIcon s={16} /></SplitMain>
                <SplitArrow aria-label="Тип слоя"><Down /></SplitArrow>
              </SplitBtn>
              <Btn $w={46} $h={33} aria-label="Дублировать"><Svg s={20} sw={1.800}><path d="M5 1h14v14H5zM1 5v14h15" /></Svg></Btn>
              <Btn $w={46} $h={33} $gap={0} aria-label="Ниже"><Svg s={20}><path d="M0 5l10 9 10-9" /></Svg></Btn>
              <Btn $w={46} $h={33} $gap={0} aria-label="Выше"><Svg s={20}><path d="M0 15l10-9 10 9" /></Svg></Btn>
              <SplitBtn $w={46} $h={33}>
                <SplitMain aria-label="Свойства слоя"><Svg s={20}><path d="M0 4h20M0 10h20M0 16h20" strokeWidth="1.800" /><path d="M15 4h.5M5 10h.5M11 16h.5" strokeWidth="4.500" strokeLinecap="round" /></Svg></SplitMain>
                <SplitArrow aria-label="Параметры"><Down /></SplitArrow>
              </SplitBtn>
              <Btn $w={46} $h={33} $gap={0} aria-label="Удалить слой"><TrashIcon s={20} /></Btn>
            </Row>
          </Dock>
        </Docks>
      </Middle>

      <StatusBar>
        <Btn $w={47} $h={26} $gap={0} aria-label="Выделение">
          <Svg s={16} vb="0 0 16 16" sw={1.200}><path d="M.6.6h14.800v14.800H.6z" /><circle cx="8" cy="8" r="5" strokeDasharray="1.200 1.200" /></Svg>
        </Btn>
        <BrushName>d) Ink-3 Gpen</BrushName>
        <ProfileText>RGB/альфа-канал (8-бит/канал)  sRGB-elle-V2-srgbtrc.icc</ProfileText>
        <StatusText $w={136}>1,920 <u>x</u> 1,080 (14.4 МиБ)</StatusText>
        <Dial />
        <StatusText $w={168} $gap={15}>0.00˚</StatusText>
        <StatusText $w={49}>80.0%</StatusText>
        <MiniRange $w={81} type="range" defaultValue={30} $fill={30} aria-label="Масштаб холста" />
        <Btn $w={47} $h={26} aria-label="По размеру окна">{MonitorIcon}</Btn>
      </StatusBar>
    </Window>
  );
}
